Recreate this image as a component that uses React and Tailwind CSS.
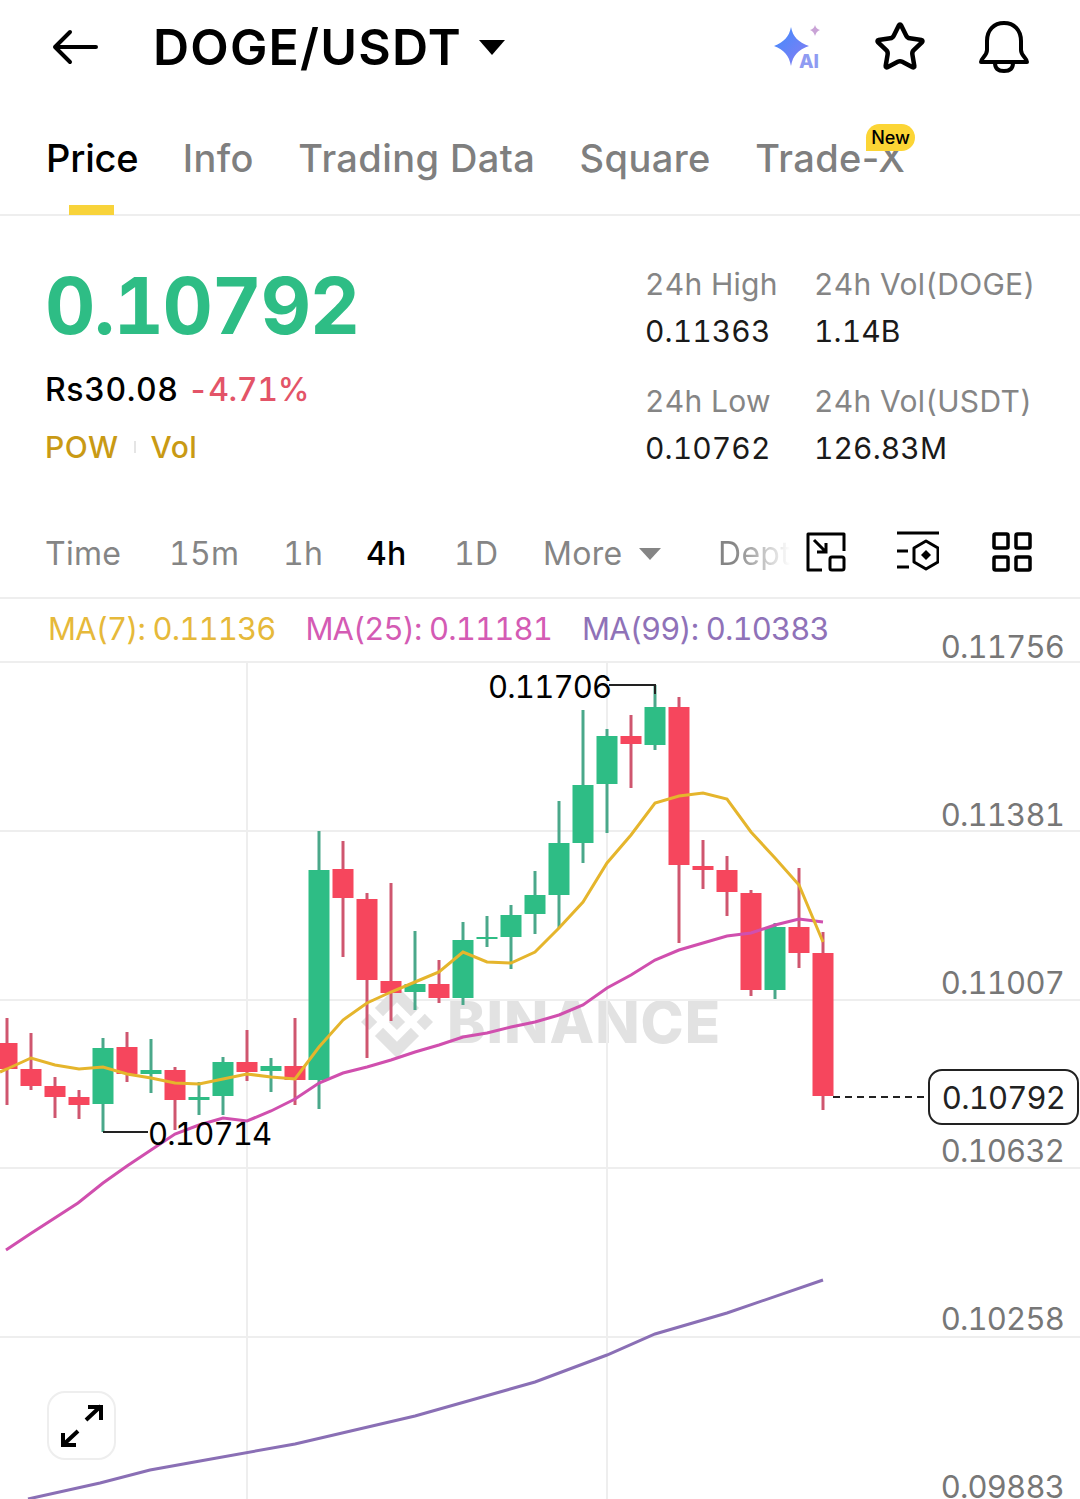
import { Star } from 'lucide-react'

const FONT = "font-['Inter','Noto_Sans',sans-serif]"

// x, wick top, wick bottom, body top, body bottom, up?
const candles = [
  [7, 1018, 1105, 1043, 1069, 0], [31, 1033, 1090, 1069, 1086, 0], [55, 1077, 1118, 1086, 1097, 0],
  [79, 1090, 1119, 1097, 1105, 0], [103, 1038, 1132, 1048, 1104, 1], [127, 1032, 1082, 1047, 1074, 0],
  [151, 1039, 1093, 1070, 1074, 1], [175, 1067, 1130, 1070, 1100, 0], [199, 1082, 1115, 1097, 1100, 1],
  [223, 1057, 1115, 1062, 1096, 1], [247, 1030, 1081, 1062, 1072, 0], [271, 1058, 1092, 1066, 1071, 1],
  [295, 1018, 1105, 1066, 1080, 0], [319, 831, 1109, 870, 1080, 1], [343, 841, 957, 869, 898, 0],
  [367, 893, 1058, 899, 980, 0], [391, 883, 1021, 981, 993, 0], [415, 931, 1010, 984, 992, 1],
  [439, 960, 1003, 984, 998, 0], [463, 922, 1005, 940, 998, 1], [487, 916, 947, 937, 939, 1],
  [511, 905, 969, 915, 937, 1], [535, 871, 934, 895, 914, 1], [559, 801, 928, 843, 895, 1],
  [583, 710, 863, 785, 843, 1], [607, 729, 833, 736, 784, 1], [631, 715, 788, 736, 744, 0],
  [655, 685, 750, 707, 745, 1], [679, 697, 943, 707, 865, 0], [703, 840, 889, 866, 870, 0],
  [727, 856, 916, 870, 892, 0], [751, 890, 996, 893, 990, 0], [775, 923, 999, 927, 990, 1],
  [799, 868, 968, 927, 953, 0], [823, 932, 1110, 953, 1096, 0],
]

const ma7 = '0,1072 7,1069 31,1058 55,1065 79,1069 103,1067 127,1074 151,1078 175,1083 199,1084 223,1079 247,1074 271,1077 295,1079 319,1047 343,1020 367,1003 391,992 415,982 439,972 463,952 487,962 511,963 535,952 559,928 583,902 607,863 631,835 655,803 679,796 703,793 727,799 751,832 775,858 799,885 823,942'
const ma25 = '6,1250 30,1234 78,1203 103,1183 127,1166 151,1150 175,1134 199,1125 223,1118 247,1121 271,1111 295,1099 319,1083 343,1073 367,1067 391,1060 415,1052 439,1045 463,1037 487,1033 511,1027 535,1022 559,1015 583,1005 607,988 631,975 655,960 679,950 703,943 727,936 751,933 775,925 799,919 823,922'
const ma99 = '28,1499 100,1483 150,1470 200,1461 295,1444 415,1416 535,1382 607,1355 655,1334 727,1313 823,1280'

const tabs = ['Info', 'Trading Data', 'Square']
const intervals = [
  ['Time', 'w-[124px]'],
  ['15m', 'w-[114px]'],
  ['1h', 'w-[83px]'],
  ['4h', 'w-[88px] font-medium text-black'],
  ['1D', 'w-[89px]'],
  ['More', 'w-[96px]'],
]
const axis = ['0.11756', '0.11381', '0.11007', '0.10632', '0.10258', '0.09883']

function AiIcon() {
  return (
    <svg width="52" height="50" viewBox="0 0 52 50" className="mt-[4px] shrink-0">
      <defs>
        <linearGradient id="spark" x1="0" y1="0" x2="1" y2="1">
          <stop offset="0" stopColor="#3f8cff" />
          <stop offset="1" stopColor="#8a7cf0" />
        </linearGradient>
      </defs>
      <path d="M17 3 C19 13 24 18 35 22 C24 26 19 31 17 42 C15 31 10 26 0 22 C10 18 15 13 17 3Z" fill="url(#spark)" />
      <path d="M41 1 C42 4 43 5 46 6 C43 7 42 9 41 12 C40 9 39 7 36 6 C39 5 40 4 41 1Z" fill="#c9a3d6" />
      <text x="25" y="44" fontSize="19" fontWeight="800" fill="#8f9bf2" fontFamily="Inter, sans-serif">AI</text>
    </svg>
  )
}

function BellIcon() {
  return (
    <svg width="52" height="54" viewBox="0 0 52 54" fill="none" stroke="#000" strokeWidth="4" strokeLinejoin="round" strokeLinecap="round">
      <path d="M3 42 C3 38 9 36 9 30 V21 C9 10 16 3 26 3 C36 3 43 10 43 21 V30 C43 36 49 38 49 42 Z" />
      <path d="M17 43 C17 49 21 51 26 51 C31 51 35 49 35 43" />
    </svg>
  )
}

function ShrinkIcon() {
  return (
    <svg width="40" height="40" viewBox="0 0 40 40" fill="none" stroke="#000" strokeWidth="3">
      <path d="M13 2 H38 V19 M2 13 V2 H13 M2 13 V38 H16" strokeLinejoin="round" />
      <rect x="24" y="25" width="14" height="13" rx="2" />
      <path d="M8 8 L20 20 M20 11 V20 H11" />
    </svg>
  )
}

function SettingsIcon() {
  return (
    <svg width="42" height="42" viewBox="0 0 42 42" fill="none" stroke="#000" strokeWidth="3">
      <path d="M0 2 H42 M0 20 H11 M0 36 H12" />
      <path d="M29 10 L41 17 V31 L29 38 L17 31 V17 Z" strokeLinejoin="round" />
      <path d="M29 19 L34 24 L29 29 L24 24 Z" fill="#000" stroke="none" />
    </svg>
  )
}

function GridIcon() {
  return (
    <svg width="40" height="40" viewBox="0 0 40 40" fill="none" stroke="#000" strokeWidth="3.5">
      <rect x="2" y="2" width="14" height="14" rx="1.5" />
      <rect x="24" y="2" width="14" height="14" rx="1.5" />
      <rect x="2" y="25" width="14" height="13" rx="1.5" />
      <rect x="24" y="25" width="14" height="13" rx="1.5" />
    </svg>
  )
}

function Stat({ label, value }) {
  return (
    <div className="tabular-nums">
      <div className="h-[36px] text-[30px] leading-[36px] tracking-[0.3px] text-[#858585]">{label}</div>
      <div className="mt-[11px] h-[36px] text-[30px] leading-[36px] tracking-[0.1px] text-[#1a1a1a]">{value}</div>
    </div>
  )
}

function Chart() {
  return (
    <svg width="1080" height="901" viewBox="0 598 1080 901" className="absolute inset-0">
      <g stroke="#eeeeee" strokeWidth="2">
        {[598, 662, 831, 1000, 1168, 1337].map((y) => <line key={y} x1="0" x2="1080" y1={y} y2={y} />)}
        {[247, 607].map((x) => <line key={x} x1={x} x2={x} y1="662" y2="1499" />)}
      </g>
      <g transform="translate(361 986) scale(3)" fill="#e2e2e2">
        <path d="M16.624 13.9202l2.7175 2.7154-7.353 7.353-7.353-7.352 2.7175-2.7164 4.6355 4.6595 4.6356-4.6595zm4.6366-4.6366L24 12l-2.7154 2.7164L18.5682 12l2.6924-2.7164zm-9.272.001l2.7163 2.6914-2.7164 2.7174v-.001L9.2721 12l2.7164-2.7154zm-9.2722-.001L5.4088 12l-2.6914 2.6924L0 12l2.7164-2.7164zM11.9885.0115l7.353 7.329-2.7174 2.7154-4.6356-4.6356-4.6355 4.6595-2.7174-2.7154 7.353-7.353z" />
      </g>
      {candles.map(([x, wt, wb, bt, bb, up]) => (
        <g key={x}>
          <line x1={x} x2={x} y1={wt} y2={wb} stroke={up ? '#4aa88a' : '#cf566f'} strokeWidth="3" />
          <rect x={x - 10.5} y={bt} width="21" height={bb - bt} fill={up ? '#2ebd85' : '#f6465d'} />
        </g>
      ))}
      <polyline points={ma99} fill="none" stroke="#8a6fb5" strokeWidth="3" />
      <polyline points={ma25} fill="none" stroke="#d04fae" strokeWidth="3" />
      <polyline points={ma7} fill="none" stroke="#e5b52c" strokeWidth="3" />
      <path d="M609 685 H655 V694 M103 1132 H148" fill="none" stroke="#222" strokeWidth="2" />
      <line x1="833" x2="928" y1="1097" y2="1097" stroke="#222" strokeWidth="2" strokeDasharray="7 5" />
    </svg>
  )
}

export default function App() {
  return (
    <div className={`${FONT} h-[1499px] w-[1080px] overflow-hidden bg-white`}>
      {/* top bar */}
      <div className="flex h-[94px] items-center pl-[52px] pr-[50px]">
        <svg width="46" height="36" viewBox="0 0 46 36" fill="none" stroke="#000" strokeWidth="4" strokeLinecap="round" strokeLinejoin="round">
          <path d="M44 18 H3 M18 3 L3 18 L18 33" />
        </svg>
        <h1 className="ml-[55px] text-[50px] font-semibold leading-none tracking-[1.2px] text-black">DOGE/USDT</h1>
        <div className="ml-[17px] h-0 w-0 border-x-[13px] border-t-[15px] border-x-transparent border-t-black" />
        <div className="ml-auto flex items-center gap-[47px]">
          <AiIcon />
          <Star size={54} strokeWidth={2} color="#000" className="mr-[4px]" />
          <BellIcon />
        </div>
      </div>

      {/* tabs */}
      <div className="relative flex h-[122px] items-start gap-[44.4px] border-b-2 border-[#eeeeee] pl-[46px] pt-[41px] text-[38px] font-medium leading-[46px] tracking-[0.4px] text-[#7f7f7f]">
        <div className="relative tracking-[-0.2px] text-black">
          Price
          <div className="absolute left-[23px] top-[70px] h-[10px] w-[45px] bg-[#f8d33a]" />
        </div>
        {tabs.map((t) => <div key={t}>{t}</div>)}
        <div className="relative">
          Trade-X
          <div className="absolute left-[111px] top-[-11px] rounded-full rounded-bl-[4px] bg-[#fcd535] px-[5px] text-[18px] font-medium leading-[27px] tracking-normal text-black">New</div>
        </div>
      </div>

      {/* price block */}
      <div className="flex h-[295px] pl-[45px] pt-[50px]">
        <div className="w-[600px]">
          <div className="text-[78px] font-bold leading-[80px] tracking-[-1.4px] tabular-nums text-[#2ebd85]">0.10792</div>
          <div className="mt-[24px] flex items-baseline gap-[9px] text-[32px] font-medium leading-[40px] tabular-nums">
            <span className="tracking-[0.6px] text-black">Rs30.08</span>
            <span className="tracking-[-0.3px] text-[#e35468]">-4.71%</span>
          </div>
          <div className="mt-[19px] flex items-center text-[30px] font-medium leading-[36px] tracking-[0.5px] text-[#c99a14]">
            <span>POW</span>
            <span className="mx-[15px] h-[12px] w-[2px] bg-[#e5e5e5]" />
            <span>Vol</span>
          </div>
        </div>
        <div className="grid grid-cols-[169px_1fr] content-start gap-y-[34px]">
          <Stat label="24h High" value="0.11363" />
          <Stat label="24h Vol(DOGE)" value="1.14B" />
          <Stat label="24h Low" value="0.10762" />
          <Stat label="24h Vol(USDT)" value="126.83M" />
        </div>
      </div>

      {/* interval row */}
      <div className="flex h-[87px] items-center border-b border-[#eeeeee] pl-[45px] text-[32px] leading-none tracking-[0.3px] tabular-nums text-[#858585]">
        {intervals.map(([t, cls]) => (
          <span key={t} className={cls}>{t}</span>
        ))}
        <div className="h-0 w-0 border-x-[11px] border-t-[12px] border-x-transparent border-t-[#858585]" />
        <div className="ml-[57px] w-[76px] overflow-hidden bg-gradient-to-r from-[#858585] from-20% to-white to-95% bg-clip-text text-transparent">Depth</div>
        <div className="ml-[12px] mb-[4px] flex items-center">
          <ShrinkIcon />
          <div className="ml-[51px]"><SettingsIcon /></div>
          <div className="ml-[53px]"><GridIcon /></div>
        </div>
      </div>

      {/* chart */}
      <div className="relative h-[901px] overflow-hidden tabular-nums">
        <div className="absolute left-[447px] top-[394px] text-[58px] font-extrabold leading-[60px] tracking-[1px] text-[#e2e2e2]">BINANCE</div>
        <Chart />
        <div className="relative flex gap-[30px] pl-[48px] pt-[13px] text-[31px] leading-[36px] tracking-[-0.85px]">
          <span className="text-[#e6b93a]">MA(7): 0.11136</span>
          <span className="text-[#d45bb4]">MA(25): 0.11181</span>
          <span className="text-[#8f72b8]">MA(99): 0.10383</span>
        </div>
        <div className="absolute right-[16px] top-[31px] text-right text-[31px] leading-[36px] tracking-[-0.8px] text-[#777777]">
          {axis.map((v) => <div key={v} className="h-[168.1px]">{v}</div>)}
        </div>
        <div className="absolute left-[488px] top-[71px] text-[31px] leading-[36px] tracking-[-0.8px] text-black">0.11706</div>
        <div className="absolute left-[148px] top-[518px] text-[31px] leading-[36px] tracking-[-0.8px] text-black">0.10714</div>
        <div className="absolute left-[928px] top-[471px] flex h-[56px] w-[151px] items-center justify-center rounded-[14px] border-2 border-[#222] bg-white pt-[3px] text-[31px] tracking-[-0.8px] text-[#222]">0.10792</div>
        <div className="absolute left-[47px] top-[793px] flex h-[69px] w-[69px] items-center justify-center rounded-[18px] border-2 border-[#eeeeee] bg-white">
          <svg width="44" height="44" viewBox="0 0 44 44" fill="none" stroke="#000" strokeWidth="4">
            <path d="M26 16 L41 2 M28 3 H41 V16" />
            <path d="M18 27 L3 41 M3 29 V41 H16" />
          </svg>
        </div>
      </div>
    </div>
  )
}
